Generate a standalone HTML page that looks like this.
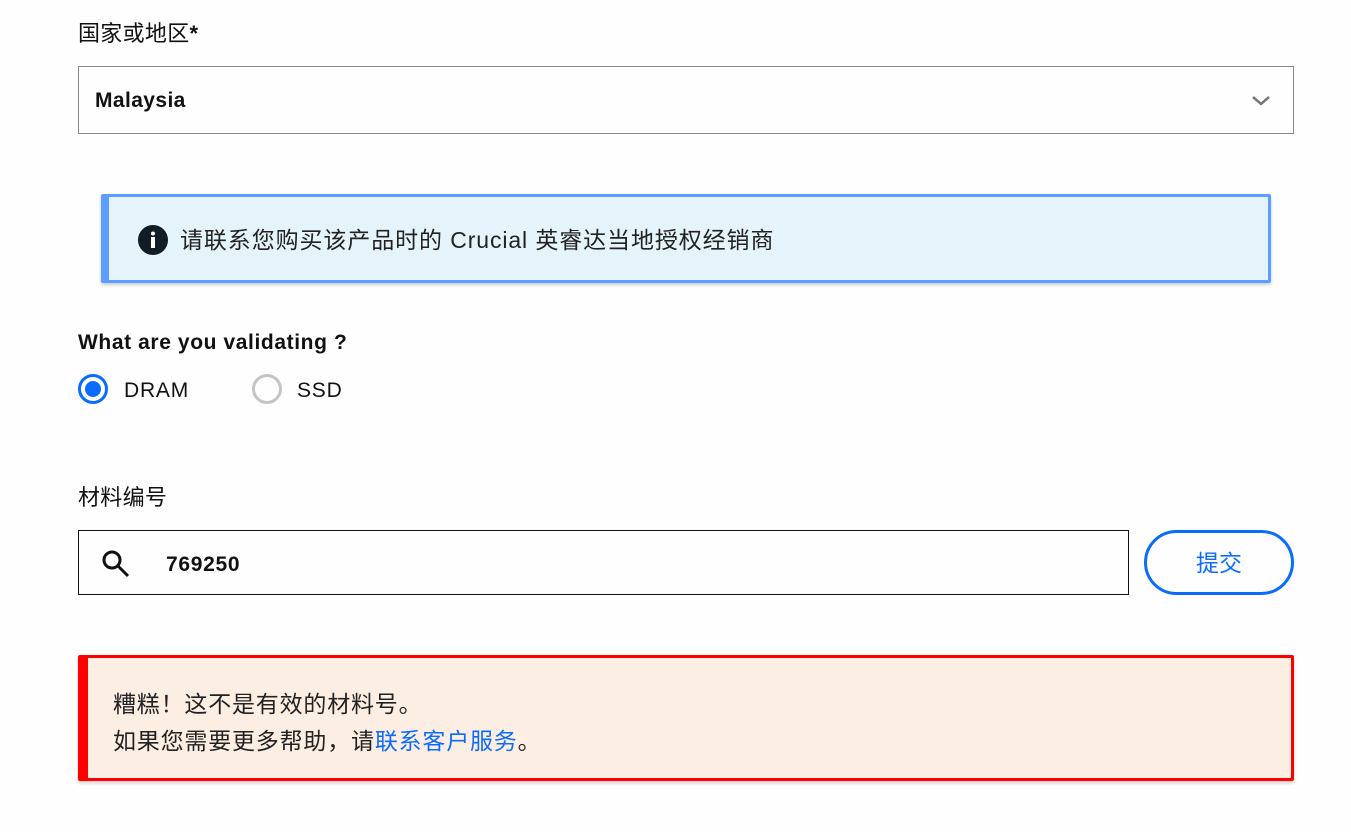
<!DOCTYPE html>
<html><head><meta charset="utf-8"><style>
*{box-sizing:border-box;margin:0;padding:0}
body{width:1351px;height:832px;background:#fefefe;font-family:"Liberation Sans","Noto Sans CJK SC",sans-serif;color:#111;position:relative;overflow:hidden}
.a{position:absolute}
</style></head><body>
<div class="a" style="left:78px;top:20px;font-size:22px;line-height:28px;letter-spacing:.3px">国家或地区<b>*</b></div>
<div class="a" style="left:78px;top:66px;width:1216px;height:68px;border:1px solid #888;"></div>
<div class="a" style="left:95px;top:88px;font-size:21px;font-weight:bold;line-height:26px;letter-spacing:.4px">Malaysia</div>
<svg class="a" style="left:1251px;top:94px" width="20" height="14" viewBox="0 0 20 14"><path d="M2 3 L10 10 L18 3" fill="none" stroke="#777" stroke-width="2.5"/></svg>

<div class="a" style="left:101px;top:194px;width:1170px;height:89px;background:#e5f3fa;border:3px solid #5b9eff;border-left-width:8px;border-radius:2px;box-shadow:0 2px 3px rgba(0,0,0,.2)"></div>
<svg class="a" style="left:138px;top:225px" width="30" height="30" viewBox="0 0 30 30"><circle cx="15" cy="15" r="15" fill="#111c27"/><circle cx="15" cy="8.5" r="2" fill="#fff"/><rect x="13" y="12" width="4" height="11" fill="#fff"/></svg>
<div class="a" style="left:180px;top:225px;font-size:23px;line-height:30px;color:#222;letter-spacing:.9px">请联系您购买该产品时的 Crucial 英睿达当地授权经销商</div>

<div class="a" style="left:78px;top:330px;font-size:21px;font-weight:bold;line-height:26px;letter-spacing:.6px">What are you validating ?</div>
<div class="a" style="left:78px;top:374px;width:30px;height:30px;border:3px solid #0a6cff;border-radius:50%"></div>
<div class="a" style="left:85px;top:381px;width:16px;height:16px;background:#0a6cff;border-radius:50%"></div>
<div class="a" style="left:124px;top:378px;font-size:21px;line-height:26px;letter-spacing:.8px">DRAM</div>
<div class="a" style="left:252px;top:374px;width:30px;height:30px;border:3px solid #c4c4c4;border-radius:50%"></div>
<div class="a" style="left:297px;top:378px;font-size:21px;line-height:26px;letter-spacing:.8px">SSD</div>

<div class="a" style="left:78px;top:484px;font-size:22px;line-height:28px;letter-spacing:.3px">材料编号</div>
<div class="a" style="left:78px;top:530px;width:1051px;height:65px;border:1px solid #111"></div>
<svg class="a" style="left:101px;top:549px" width="30" height="30" viewBox="0 0 30 30"><circle cx="11" cy="11" r="8" fill="none" stroke="#111" stroke-width="3"/><path d="M17 17 L27 27" stroke="#111" stroke-width="3"/></svg>
<div class="a" style="left:166px;top:551px;font-size:21px;font-weight:bold;line-height:28px;letter-spacing:.7px">769250</div>
<div class="a" style="left:1144px;top:530px;width:150px;height:65px;border:3px solid #0a6cff;border-radius:33px;color:#0a6cff;font-size:23px;text-align:center;line-height:61px">提交</div>

<div class="a" style="left:78px;top:655px;width:1216px;height:126px;background:#fdeee4;border:3px solid #f00;border-left-width:10px;border-radius:2px;box-shadow:0 2px 3px rgba(0,0,0,.2)"></div>
<div class="a" style="left:113px;top:686px;font-size:23px;line-height:37px;color:#222;letter-spacing:.8px">糟糕！这不是有效的材料号。<br>如果您需要更多帮助，请<span style="color:#0a6cff">联系客户服务</span>。</div>
</body></html>
